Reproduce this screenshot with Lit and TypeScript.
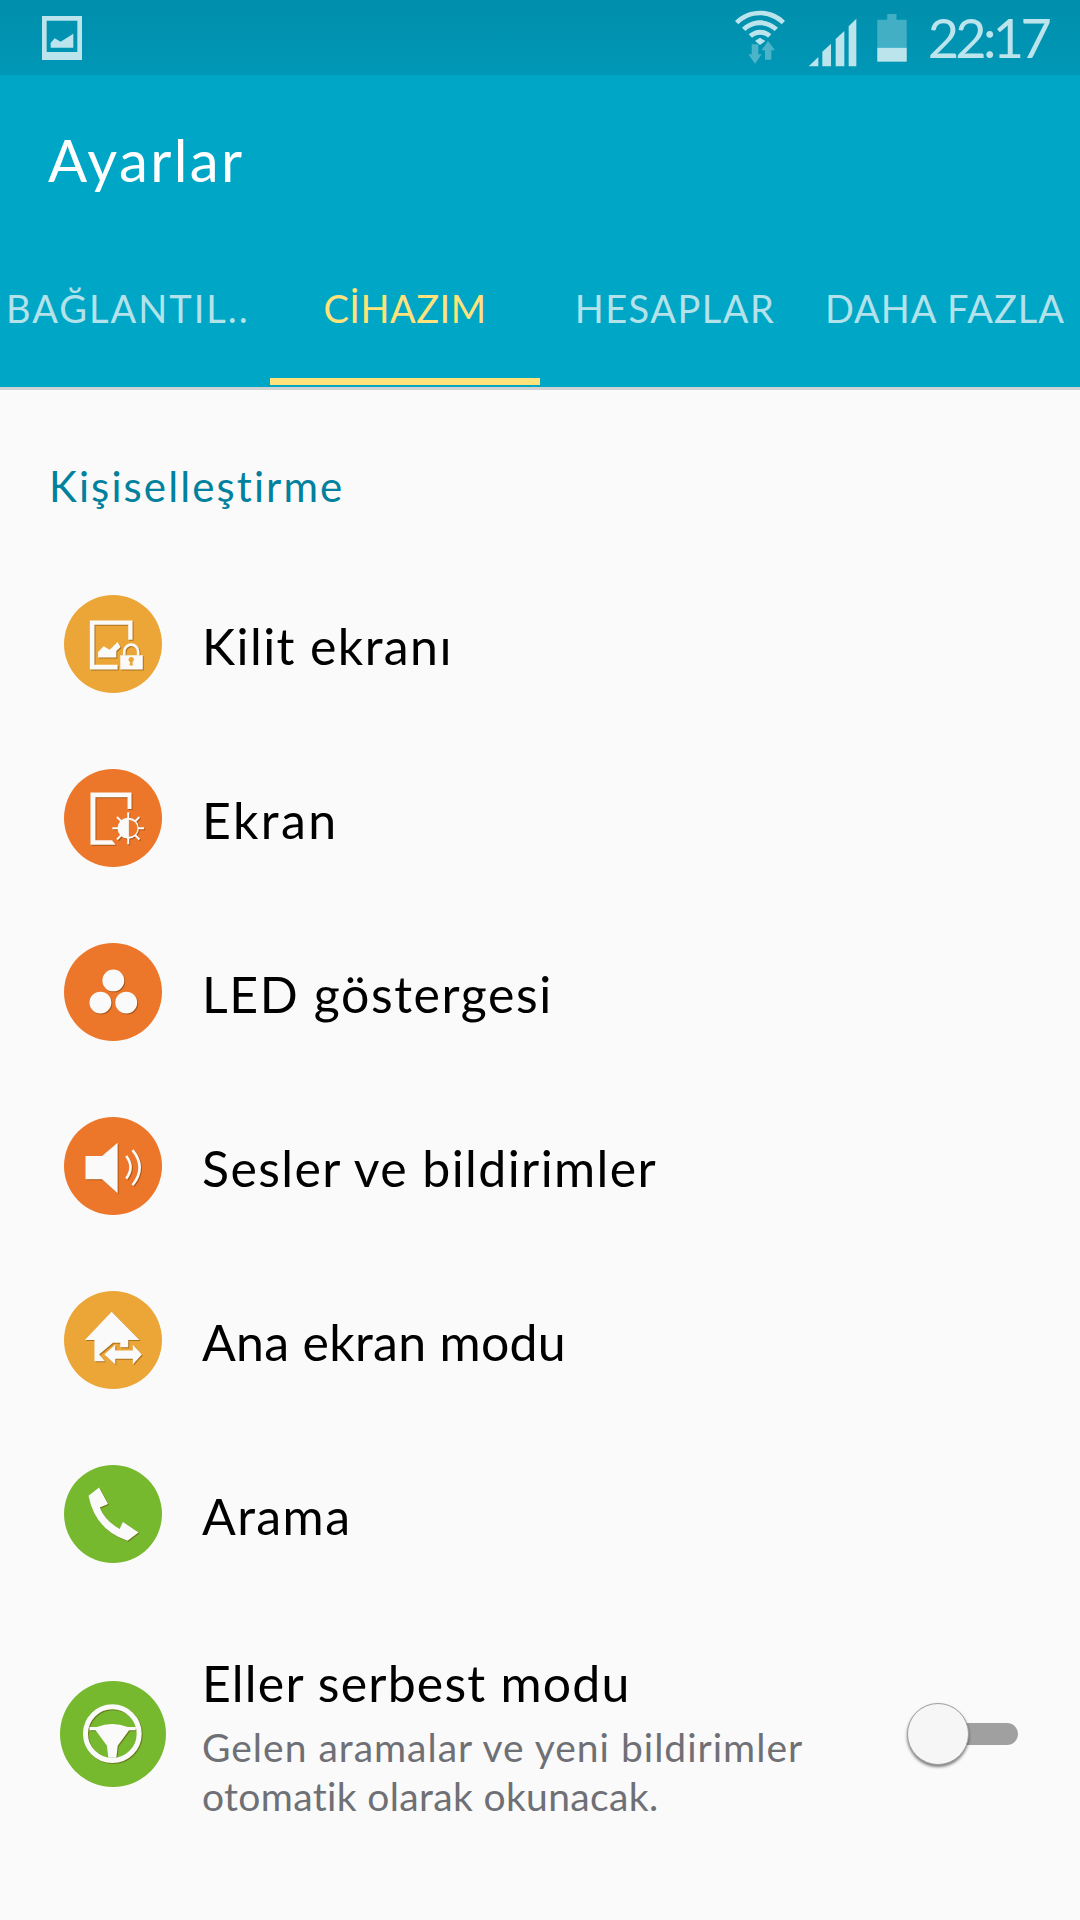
import { LitElement, html, css, svg } from 'lit';
import { customElement } from 'lit/decorators.js';

type Row = { label: string; spacing: number; color: string; icon: unknown; vb: string };

const tabs = [
  { label: 'BAĞLANTIL..', spacing: 2, cls: 'first' },
  { label: 'CİHAZIM', spacing: 0.5, cls: 'on' },
  { label: 'HESAPLAR', spacing: 1.5, cls: '' },
  { label: 'DAHA FAZLA', spacing: 1, cls: '' }
];

// icon paths use crop coordinates, the viewBox shifts them onto the circle
const rows: Row[] = [
  {
    label: 'Kilit ekranı',
    spacing: 1.4,
    color: '#eba637',
    vb: '70 43 296 296',
    icon: svg`
      <path d="M148 120H277V178H264V133H162V254H232V268H148Z" />
      <path d="M173 232V215L190 198L208 208L232 185L241 200L228 212V232Z" />
      <rect x="240" y="225" width="68" height="43" />
      <path class="line" d="M252 226V214a21 21 0 0 1 42 0V226" stroke-width="8" />
      <circle class="hole" cx="273" cy="238" r="8" />
      <path class="hole" d="M270 240H276L278 256H268Z" />`
  },
  {
    label: 'Ekran',
    spacing: 2.4,
    color: '#ec7629',
    vb: '70 565 296 296',
    icon: svg`
      <path d="M150 636H274V686H262V650H165V780H215L226 794H150Z" />
      <path class="line" d="M264 696V792M216 744H312M230 710L298 778M298 710L230 778" stroke-width="6" />
      <circle cx="264" cy="744" r="32" />
      <path class="half" d="M266 718a26 26 0 0 1 0 52Z" />`
  },
  {
    label: 'LED göstergesi',
    spacing: 1.6,
    color: '#ec7629',
    vb: '70 37 296 296',
    icon: svg`
      <circle cx="219" cy="150" r="33" />
      <circle cx="180" cy="217" r="33" />
      <circle cx="258" cy="217" r="33" />`
  },
  {
    label: 'Sesler ve bildirimler',
    spacing: 1.4,
    color: '#ec7629',
    vb: '70 560 296 296',
    icon: svg`
      <path d="M135 678H185L232 638V790L185 748H135Z" />
      <path class="line" d="M258 678Q284 712 258 746" stroke-width="8" />
      <path class="line" d="M277 660Q320 712 277 766" stroke-width="8" />`
  },
  {
    label: 'Ana ekran modu',
    spacing: 0.3,
    color: '#eba637',
    vb: '70 30 296 296',
    icon: svg`
      <path d="M214 93L298 178H264V200H240V186H218L176 222L194 242H162V178H133Z" />
      <path d="M192 222L225 192V210H278V192L305 222L278 252V235H225V252Z" />`
  },
  {
    label: 'Arama',
    spacing: 1.4,
    color: '#76b82e',
    vb: '70 553 296 296',
    icon: svg`
      <path d="M144 646L176 621L203 671L178 681Q195 722 238 746L248 725L295 757L262 782Q165 750 144 646Z" />`
  }
];

@customElement('app-root')
export class AppRoot extends LitElement {
  static styles = css`
    :host {
      display: block;
      width: 1080px;
      height: 1920px;
      overflow: hidden;
      background: #fafafa;
      font-family: Lato, 'Noto Sans', sans-serif;
    }
    .status {
      height: 75px;
      display: flex;
      align-items: center;
      padding: 0 32px 0 42px;
      background: linear-gradient(#008fac, #0097b6);
      color: #bce4ec;
    }
    .status svg {
      display: block;
      fill: #bce4ec;
    }
    .status .spacer {
      flex: 1;
    }
    .wifi {
      width: 50px;
      height: 55px;
      margin-right: 23px;
    }
    .signal {
      width: 49px;
      height: 49px;
      margin-right: 20px;
      margin-top: 10px;
    }
    .battery {
      width: 30px;
      height: 48px;
      margin-right: 21px;
    }
    .time {
      font-size: 54px;
      line-height: 60px;
      letter-spacing: -3.7px;
    }
    .header {
      background: #00a6c6;
      border-bottom: 3px solid #cfd3d4;
    }
    .title {
      height: 170px;
      padding-left: 48px;
      font-size: 58px;
      line-height: 170px;
      letter-spacing: 2.4px;
      color: #fff;
    }
    .tabs {
      display: grid;
      grid-template-columns: repeat(4, 270px);
      padding-bottom: 2px;
    }
    .tab {
      display: flex;
      flex-direction: column;
      align-items: center;
      padding-top: 33px;
      font-size: 38px;
      line-height: 60px;
      color: #b3e2ea;
      white-space: nowrap;
    }
    .tab.first {
      align-items: flex-start;
      padding-left: 6px;
    }
    .tab.on {
      color: #ffe27a;
    }
    .tab i {
      display: block;
      width: 100%;
      height: 7px;
      margin-top: 40px;
    }
    .tab.on i {
      background: #ffe27a;
    }
    .section {
      padding: 66px 0 41px 49px;
      font-size: 42px;
      line-height: 60px;
      letter-spacing: 2.1px;
      color: #00819d;
    }
    .row {
      height: 174px;
      display: flex;
      align-items: center;
      padding-left: 60px;
    }
    .slot {
      width: 106px;
      display: flex;
      justify-content: center;
      margin-right: 36px;
    }
    .dot {
      width: 98px;
      height: 98px;
      border-radius: 50%;
    }
    .dot.big {
      width: 106px;
      height: 106px;
    }
    .dot svg {
      display: block;
      width: 100%;
      height: 100%;
      fill: #fafafa;
      filter: drop-shadow(1px 1px 0 rgba(90, 50, 0, 0.45));
    }
    .dot svg .line {
      fill: none;
      stroke: #fafafa;
    }
    .dot svg .hole {
      fill: #eba637;
    }
    .dot svg .half {
      fill: #ec7629;
    }
    .name {
      font-size: 50px;
      line-height: 60px;
      color: #000;
    }
    .row .name.plain {
      padding-top: 4px;
    }
    .last {
      height: auto;
      margin-top: 46px;
      padding-right: 62px;
    }
    .last .name {
      letter-spacing: 1.2px;
      margin-top: -2px;
    }
    .texts {
      flex: 1;
      padding-top: 8px;
    }
    .sub {
      font-size: 39px;
      line-height: 49px;
      color: #6f7076;
    }
    .sub.one {
      margin-top: 10px;
      letter-spacing: 1px;
    }
    .sub.two {
      letter-spacing: 0.35px;
    }
    .switch {
      position: relative;
      width: 111px;
      height: 63px;
      display: flex;
      align-items: center;
      justify-content: flex-end;
    }
    .track {
      width: 78px;
      height: 22px;
      border-radius: 0 11px 11px 0;
      background: #a0a0a0;
    }
    .knob {
      position: absolute;
      left: 0;
      top: 0;
      width: 62px;
      height: 62px;
      box-sizing: border-box;
      border-radius: 50%;
      background: #f6f6f6;
      border: 1px solid #a0a0a0;
      box-shadow: 0 2px 3px rgba(0, 0, 0, 0.5);
    }
  `;

  renderStatus() {
    return html`
      <div class="status">
        <svg width="40" height="44" viewBox="66 45 120 132">
          <path fill-rule="evenodd" d="M66 45H186V177H66ZM80 59V153H172V59Z" />
          <path d="M92 140V126L104 112L122 122L160 98V140Z" />
        </svg>
        <div class="spacer"></div>
        <svg class="wifi" viewBox="105 25 150 165">
          <path d="M180 27C210 27 236 38 255 58L245 68C228 51 205 41 180 41S132 51 115 68L105 58C124 38 150 27 180 27Z" />
          <path d="M180 56C198 56 219 64 234 78L224 88C212 77 197 71 180 71S148 77 136 88L126 78C141 64 162 56 180 56Z" />
          <path d="M180 84C192 84 204 89 214 98L204 108C197 102 189 99 180 99S163 102 156 108L146 98C156 89 168 84 180 84Z" />
          <path d="M165 118L180 108L196 118L180 130Z" />
          <path opacity="0.4" d="M155 128H175V158H185L165 186L145 158H155Z" />
          <path opacity="0.4" d="M195 174V146H184L204 118L225 146H214V174Z" />
        </svg>
        <svg class="signal" viewBox="323 35 147 147">
          <path d="M325 180L354 152V180ZM366 180V136L392 112V180ZM406 180V98L432 74V180ZM445 180V60L468 37V180Z" />
        </svg>
        <svg class="battery" viewBox="532 33 89 145">
          <path opacity="0.35" d="M562 33H590V50H621V135H532V50H562Z" />
          <rect x="532" y="135" width="89" height="42" />
        </svg>
        <div class="time">22:17</div>
      </div>
    `;
  }

  renderRow(r: Row) {
    return html`
      <div class="row">
        <div class="slot">
          <div class="dot" style="background:${r.color}">
            <svg viewBox=${r.vb}>${r.icon}</svg>
          </div>
        </div>
        <div class="name plain" style="letter-spacing:${r.spacing}px">${r.label}</div>
      </div>
    `;
  }

  render() {
    return html`
      ${this.renderStatus()}
      <div class="header">
        <div class="title">Ayarlar</div>
        <div class="tabs">
          ${tabs.map(
            (t) => html`<div class="tab ${t.cls}" style="letter-spacing:${t.spacing}px">${t.label}<i></i></div>`
          )}
        </div>
      </div>
      <div class="section">Kişiselleştirme</div>
      ${rows.map((r) => this.renderRow(r))}
      <div class="row last">
        <div class="slot">
          <div class="dot big" style="background:#76b82e">
            <svg viewBox="62 1203 316 316">
              <circle class="line" cx="218" cy="1360" r="80" stroke-width="15" />
              <path d="M150 1340H172Q218 1322 264 1340H288V1350H268L234 1396L230 1432H206L202 1396L168 1350H150Z" />
            </svg>
          </div>
        </div>
        <div class="texts">
          <div class="name">Eller serbest modu</div>
          <div class="sub one">Gelen aramalar ve yeni bildirimler</div>
          <div class="sub two">otomatik olarak okunacak.</div>
        </div>
        <div class="switch">
          <div class="track"></div>
          <div class="knob"></div>
        </div>
      </div>
    `;
  }
}
